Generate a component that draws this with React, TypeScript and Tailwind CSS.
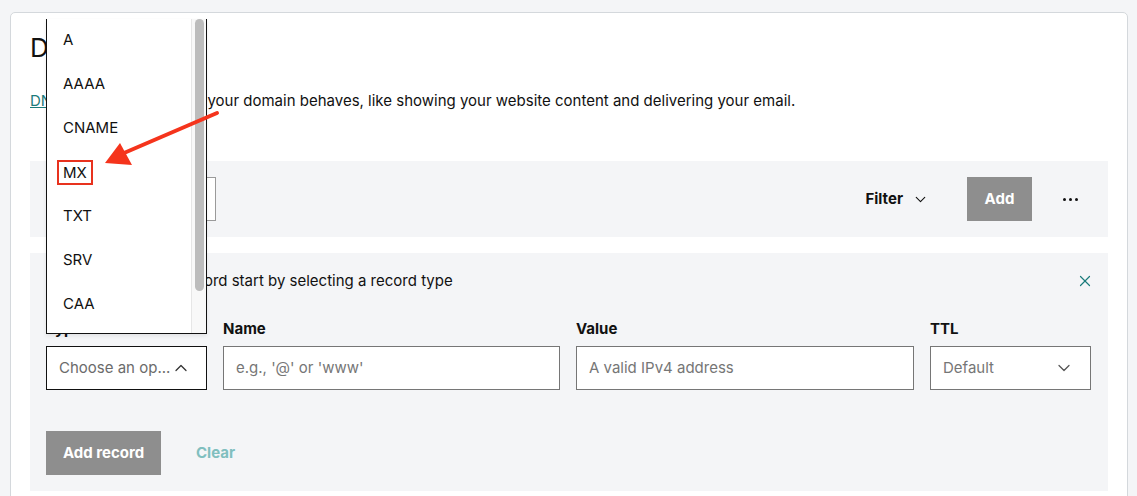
import React from 'react';
import { X, ChevronUp, ChevronDown } from 'lucide-react';

const recordTypes = ['A', 'AAAA', 'CNAME', 'MX', 'TXT', 'SRV', 'CAA'];

const fontStack = { fontFamily: 'Inter, "Noto Sans", sans-serif' };

const App: React.FC = () => {
  return (
    <div className="relative h-[496px] overflow-hidden bg-[#f4f5f7] text-[#111]" style={fontStack}>
      {/* Card */}
      <div className="ml-[10px] mt-[12px] w-[1118px] rounded-t-[5px] border border-[#d4d8dc] bg-white px-[19px] pt-[19px] pb-[40px]">
        <h1 className="text-[26px] leading-[32px] font-normal">DNS Records</h1>
        <p className="mt-[25px] text-[15px] leading-[24px] text-[#111]">
          <a className="text-[#1b7b7b] underline">DNS records</a> define how your domain behaves, like showing your website content and delivering your email.
        </p>

        {/* Toolbar */}
        <div className="mt-[48px] flex h-[76px] items-center bg-[#f4f5f7] px-[16px]">
          <div className="h-[44px] w-[170px] border border-[#9a9a9a] bg-white" />
          <div className="flex-1" />
          <button className="flex items-center gap-[9px] text-[15px] font-bold">
            Filter <ChevronDown className="h-[17px] w-[17px]" strokeWidth={1.6} />
          </button>
          <button className="ml-[38px] h-[44px] w-[65px] bg-[#8e8e8e] text-[15px] font-bold text-white">Add</button>
          <button className="ml-[31px] mr-[14px] flex gap-[3px]">
            <span className="h-[3px] w-[3px] rounded-full bg-[#111]" />
            <span className="h-[3px] w-[3px] rounded-full bg-[#111]" />
            <span className="h-[3px] w-[3px] rounded-full bg-[#111]" />
          </button>
        </div>

        {/* Add record panel */}
        <div className="mt-[16px] bg-[#f4f5f7] px-[16px] pt-[17px] pb-[16px]">
          <div className="flex items-center justify-between">
            <span className="text-[15px] leading-[22px]">To add a new DNS record start by selecting a record type</span>
            <X className="mr-[-2px] h-[18px] w-[18px] text-[#1b7b7b]" strokeWidth={1.6} />
          </div>

          <div className="mt-[27px] flex gap-[16px]">
            <div className="w-[161px] shrink-0">
              <div className="text-[15px] leading-[20px] font-bold">Type</div>
              <div className="mt-[7px] flex h-[44px] items-center justify-between border border-[#111] bg-white pl-[12px] pr-[15px] text-[15px] text-[#6b6b6b]">
                <span className="whitespace-nowrap">Choose an op...</span>
                <ChevronUp className="h-[20px] w-[20px] shrink-0 text-[#333]" strokeWidth={1.5} />
              </div>
            </div>
            <div className="w-[337px]">
              <div className="text-[15px] leading-[20px] font-bold">Name</div>
              <div className="mt-[7px] flex h-[44px] items-center border border-[#767676] bg-white px-[12px] text-[15px] text-[#767676]">e.g., '@' or 'www'</div>
            </div>
            <div className="w-[338px]">
              <div className="text-[15px] leading-[20px] font-bold">Value</div>
              <div className="mt-[7px] flex h-[44px] items-center border border-[#767676] bg-white px-[12px] text-[15px] text-[#767676]">A valid IPv4 address</div>
            </div>
            <div className="w-[161px]">
              <div className="text-[15px] leading-[20px] font-bold">TTL</div>
              <div className="mt-[7px] flex h-[44px] items-center justify-between border border-[#767676] bg-white pl-[12px] pr-[16px] text-[15px] text-[#767676]">
                <span>Default</span>
                <ChevronDown className="h-[20px] w-[20px] text-[#555]" strokeWidth={1.5} />
              </div>
            </div>
          </div>

          <div className="mt-[41px] flex items-center gap-[35px]">
            <button className="h-[44px] w-[115px] bg-[#8e8e8e] text-[15px] font-bold text-white">Add record</button>
            <button className="text-[15px] font-bold text-[#80bfbf]">Clear</button>
          </div>
        </div>
      </div>

      {/* Open record type dropdown */}
      <div className="absolute left-[46px] top-[19px] flex h-[315px] w-[161px] border-x border-b border-[#111] bg-white shadow-[0_2px_4px_rgba(0,0,0,0.08)]">
        <ul className="-mt-[1px] flex-1">
          {recordTypes.map(t => (
            <li key={t} className="flex h-[44px] items-center pl-[16px] text-[15px] text-[#111]">
              {t === 'MX' ? (
                <span className="-ml-[6px] border-2 border-[#e8321e] px-[4px] leading-[21px]">{t}</span>
              ) : (
                t
              )}
            </li>
          ))}
        </ul>
        <div className="flex w-[15px] justify-center border-l border-[#e6e6e6] bg-[#f8f8f8]">
          <div className="h-[272px] w-[9px] rounded-full bg-[#bcbcbc]" />
        </div>
      </div>

      {/* Annotation arrow */}
      <svg className="pointer-events-none absolute left-0 top-0" width="260" height="200">
        <line x1="217" y1="113" x2="124" y2="153" stroke="#f5341c" strokeWidth="4" strokeLinecap="round" />
        <polygon points="105,163 120,143 132,165" fill="#f5341c" />
      </svg>
    </div>
  );
};

export default App;
